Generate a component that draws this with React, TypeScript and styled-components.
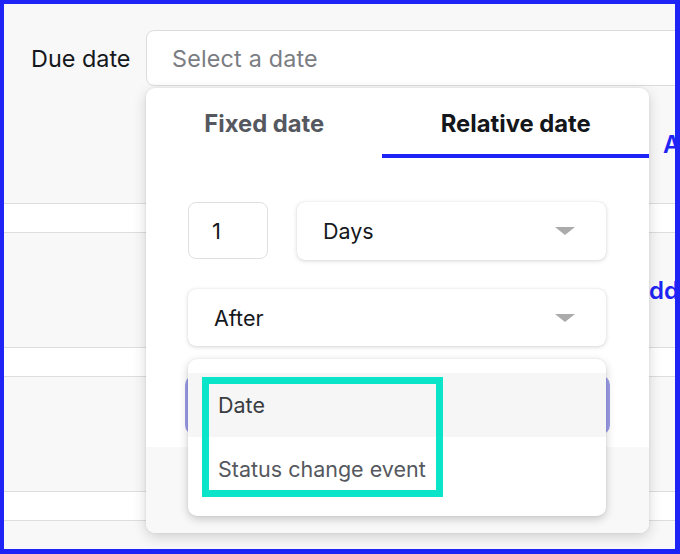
import React from "react";
import styled, { createGlobalStyle } from "styled-components";

const GlobalStyle = createGlobalStyle`
  html, body { margin: 0; padding: 0; }
  body { font-family: Inter, "Noto Sans", sans-serif; }
  * { box-sizing: border-box; }
`;

const BLUE = "#1e24f5";

const Frame = styled.div`
  position: relative;
  width: 680px;
  height: 554px;
  border: 4px solid ${BLUE};
  border-right-width: 5px;
  border-bottom-width: 5px;
  background: #f8f8f8;
  overflow: hidden;
  font-family: Inter, "Noto Sans", sans-serif;
`;

const FieldRow = styled.div`
  display: grid;
  grid-template-columns: 142px 1fr;
  align-items: center;
  padding-top: 26px;
  margin-right: -40px;
`;

const Label = styled.label`
  padding-left: 27px;
  font-size: 23.4px;
  color: #15181c;
`;

const DateInput = styled.div`
  height: 56px;
  display: flex;
  align-items: center;
  padding-left: 25px;
  background: #fff;
  border: 1px solid #dcdcdc;
  border-radius: 8px;
  font-size: 23.3px;
  color: #7a7d82;
  letter-spacing: 0.2px;
`;

const Section = styled.div<{ $h: number; $pad: number }>`
  height: ${(p) => p.$h}px;
  display: flex;
  align-items: center;
  padding-left: ${(p) => p.$pad}px;
`;

const Divider = styled.div`
  height: 30px;
  background: #fff;
  border-top: 1px solid #dedede;
  border-bottom: 1px solid #dedede;
`;

const AddLink = styled.span`
  font-size: 24px;
  font-weight: 600;
  color: ${BLUE};
  white-space: nowrap;
`;

const Popover = styled.div`
  position: absolute;
  left: 142px;
  top: 84px;
  width: 503px;
  height: 445px;
  background: #fff;
  border-radius: 9px;
  box-shadow: 0 4px 14px rgba(0, 0, 0, 0.16), 0 0 3px rgba(0, 0, 0, 0.08);
  display: flex;
  flex-direction: column;
`;

const TabList = styled.div`
  display: flex;
  height: 70px;
`;

const Tab = styled.div<{ $active?: boolean }>`
  flex: 1 1 auto;
  display: flex;
  align-items: center;
  justify-content: center;
  padding: 4px 58px 0;
  font-size: 23.8px;
  font-weight: 700;
  color: ${(p) => (p.$active ? "#13161a" : "#55585e")};
  border-bottom: 4px solid ${(p) => (p.$active ? BLUE : "transparent")};
  white-space: nowrap;
`;

const Body = styled.div`
  position: relative;
  padding: 44px 43px 12px 42px;
  display: grid;
  gap: 29px;
`;

const Row = styled.div`
  display: flex;
  gap: 29px;
`;

const NumberBox = styled.div`
  flex: none;
  width: 80px;
  height: 57px;
  display: flex;
  align-items: center;
  padding-left: 23px;
  border: 1px solid #e0e0e0;
  border-radius: 8px;
  font-size: 22px;
  color: #15181c;
`;

const Select = styled.div<{ $h: number }>`
  flex: 1;
  height: ${(p) => p.$h}px;
  display: flex;
  align-items: center;
  justify-content: space-between;
  padding: 0 31px 0 26px;
  background: #fff;
  border-radius: 8px;
  box-shadow: 0 1px 4px rgba(0, 0, 0, 0.16), 0 0 1px rgba(0, 0, 0, 0.12);
  font-size: 21.5px;
  color: #15181c;
`;

const Caret = styled.span`
  width: 0;
  height: 0;
  border-left: 10.5px solid transparent;
  border-right: 10.5px solid transparent;
  border-top: 8px solid #ababab;
`;

const ApplyButton = styled.div`
  height: 60px;
  margin: 0 -4px 0 -3px;
  background: #9c9ce9;
  border-radius: 10px;
`;

const Footer = styled.div`
  flex: 1;
  background: #f8f8f8;
  border-radius: 0 0 9px 9px;
`;

const Menu = styled.div`
  position: absolute;
  left: 42px;
  top: 271px;
  width: 418px;
  height: 157px;
  padding: 14px 0 15px;
  background: #fff;
  border-radius: 9px;
  box-shadow: 0 3px 10px rgba(0, 0, 0, 0.2), 0 0 2px rgba(0, 0, 0, 0.1);
`;

const MenuItem = styled.div<{ $hover?: boolean }>`
  height: 64px;
  display: flex;
  align-items: center;
  padding-left: 30px;
  font-size: 21.5px;
  color: ${(p) => (p.$hover ? "#3a3d42" : "#55585e")};
  background: ${(p) => (p.$hover ? "#f6f6f6" : "#fff")};
`;

const Highlight = styled.div`
  position: absolute;
  left: 14px;
  top: 18px;
  width: 241px;
  height: 120px;
  border: 7px solid #0ae5c9;
  pointer-events: none;
`;

export default function App() {
  return (
    <>
      <GlobalStyle />
      <Frame>
        <FieldRow>
          <Label>Due date</Label>
          <DateInput>Select a date</DateInput>
        </FieldRow>
        <Section $h={117} $pad={659}>
          <AddLink>Add</AddLink>
        </Section>
        <Divider />
        <Section $h={114} $pad={628}>
          <AddLink>Add</AddLink>
        </Section>
        <Divider />
        <Section $h={114} $pad={628} />
        <Divider />
        <Section $h={30} $pad={0} />

        <Popover>
          <TabList>
            <Tab>Fixed date</Tab>
            <Tab $active>Relative date</Tab>
          </TabList>
          <Body>
            <Row>
              <NumberBox>1</NumberBox>
              <Select $h={58}>
                Days
                <Caret />
              </Select>
            </Row>
            <Select $h={57}>
              After
              <Caret />
            </Select>
            <ApplyButton />
          </Body>
          <Footer />
          <Menu>
            <MenuItem $hover>Date</MenuItem>
            <MenuItem>Status change event</MenuItem>
            <Highlight />
          </Menu>
        </Popover>
      </Frame>
    </>
  );
}
